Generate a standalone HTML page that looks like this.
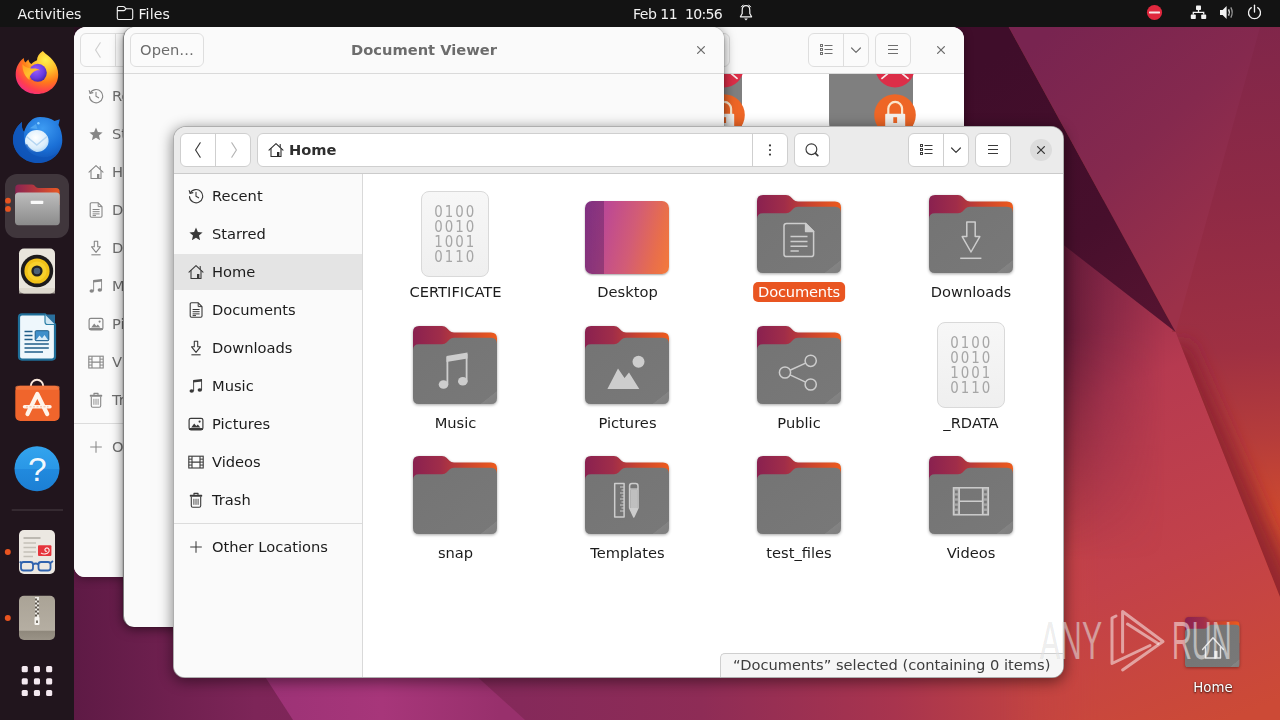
<!DOCTYPE html>
<html lang="en">
<head>
<meta charset="utf-8">
<title>Files - Home</title>
<style>
*{box-sizing:border-box;margin:0;padding:0}
html,body{width:1280px;height:720px;overflow:hidden;background:#3a0d28}
body{position:relative;font-family:"DejaVu Sans","Liberation Sans",sans-serif;font-size:14.67px;color:#1c1c1c;-webkit-font-smoothing:antialiased}
.abs{position:absolute}
#wall{position:absolute;left:0;top:0;width:1280px;height:720px}
/* top bar */
#topbar{opacity:.999;position:absolute;left:0;top:0;width:1280px;height:27px;background:#131313;color:#f2f2f2;font-size:14.1px}
#topbar span{position:absolute;top:5.5px;line-height:16px;white-space:pre}
/* dock */
#dock{position:absolute;left:0;top:27px;width:74px;height:693px;background:#21151d}
/* windows */
.win{position:absolute;background:#fafafa;overflow:hidden;opacity:.999}
.hdr{position:absolute;left:0;top:0;right:0;height:47px;background:#fafafa;border-bottom:1px solid #dadada}
.btn{position:absolute;top:7px;height:33px;background:#fff;border:1px solid #cfcfcf;border-radius:6px}
.win.back .btn{background:#fbfbfb;border-color:#dedede}
.side{position:absolute;left:0;top:47px;bottom:0;width:188px;background:#fafafa;border-right:1px solid #d9d9d9}
.row{position:absolute;left:0;width:188px;height:36px;line-height:36px;padding-left:38px;white-space:nowrap}
.row svg{position:absolute;left:14px;top:10px;width:16px;height:16px;color:#3a3a3a}
.row.sel{background:rgba(0,0,0,.088)}
.back .row{color:#6f6f6f}
.lbl{position:absolute;text-align:center;white-space:nowrap;line-height:20px;height:20px;transform:translateX(-50%)}

.hdr .ic,.btn .ic{position:absolute;top:8px;width:16px;height:16px;color:#3a3a3a}
.btn .ic{top:8px}
.split{position:absolute;top:0;bottom:0;width:1px;background:#cfcfcf}
#w3 .hdr{background:#ebebeb;border-bottom-color:#cbcbcb}
#w3 .btn{top:6px;height:34px;color:#2e2e2e}
.close{position:absolute;width:22px;height:22px;border-radius:11px;background:#dcdcdc}
.sep{position:absolute;left:0;width:188px;height:1px;background:#dcdcdc}
#w3 .side{width:189px}
.main{position:absolute;left:189px;top:47px;right:0;bottom:0;background:#fff}
.status{position:absolute;right:0;bottom:0;height:24px;width:343.5px;background:rgba(246,246,246,.996);border:1px solid #cfcfcf;border-right:0;border-bottom:0;border-radius:5px 0 0 0;line-height:22px;padding-left:12.5px;color:#3d3d3d;white-space:nowrap}

.fold{position:absolute;width:84px;height:78px;overflow:visible;filter:drop-shadow(0 1px 1.5px rgba(0,0,0,.35))}
.binf{position:absolute;width:68px;height:86px}
.desk{position:absolute;width:84.5px;height:73px;border-radius:7px;background:linear-gradient(90deg,rgba(60,20,80,.4) 0,rgba(60,20,80,.34) 19.5px,rgba(0,0,0,0) 19.5px),linear-gradient(103deg,#ac42a2 0%,#be4a92 25%,#d25c76 55%,#e86e4c 82%,#f47a3a 100%);box-shadow:0 1px 2px rgba(0,0,0,.35)}
.lbl.sel{background:rgba(233,84,32,.996);color:#fff;border-radius:5px;padding:0 5px;letter-spacing:-.2px}

.back .hdr .ic{color:#6f6f6f}
.back .btn{top:6px;height:34px;color:#6c6c6c}
.back .split{background:#dedede}
.back .row svg{color:#878787}
.back .main{left:188px}
#w1{box-shadow:0 2px 10px rgba(0,0,0,.35)}
#w2{box-shadow:0 2px 12px rgba(0,0,0,.55),0 0 0 1px rgba(0,0,0,.08)}
#w3{box-shadow:0 3px 14px 1px rgba(0,0,0,.45)}
</style>
</head>
<body>
<svg width="0" height="0" style="position:absolute">
<defs>
<linearGradient id="ftab" x1="0" y1="0" x2="1" y2="0">
<stop offset="0" stop-color="#8a2150"/><stop offset=".33" stop-color="#a02d49"/><stop offset=".62" stop-color="#c8432f"/><stop offset="1" stop-color="#ed5b1c"/>
</linearGradient>
<linearGradient id="ffront" x1="0" y1="0" x2="1" y2="1">
<stop offset="0" stop-color="#747474"/><stop offset=".9" stop-color="#787878"/><stop offset=".905" stop-color="#838383"/><stop offset="1" stop-color="#7e7e7e"/>
</linearGradient>
<linearGradient id="gbin" x1="0" y1="0" x2="0" y2="1"><stop offset="0" stop-color="#f7f7f7"/><stop offset="1" stop-color="#efefef"/></linearGradient>
<symbol id="folder" viewBox="0 0 84 78">
<path d="M0,6 Q0,0 6,0 L29,0 Q32,0 33.5,1.7 L36.5,4.8 Q38,6.4 41,6.4 L78,6.4 Q84,6.4 84,12.4 L84,40 L0,40 Z" fill="url(#ftab)"/>
<path d="M0,24 Q0,18.2 6,18.2 L29,18.2 Q32,18.2 33.5,16.6 L36.5,13.4 Q38,11.8 41,11.8 L78,11.8 Q84,11.8 84,17.8 L84,72 Q84,78 78,78 L6,78 Q0,78 0,72 Z" fill="url(#ffront)"/>
</symbol>
<symbol id="i-recent" viewBox="0 0 16 16"><g fill="none" stroke="currentColor" stroke-width="1.1" stroke-linecap="round" stroke-linejoin="round"><path d="M2.2,5.2 A6.6,6.6 0 1 1 1.5,8.6"/><path d="M1.2,2.6 L2.1,5.4 L4.9,4.6"/><path d="M8,4.2 V8.2 L10.6,9.8"/></g></symbol>
<symbol id="i-star" viewBox="0 0 16 16"><path d="M8,1.6 L9.9,6 L14.6,6.4 L11,9.5 L12.1,14.2 L8,11.7 L3.9,14.2 L5,9.5 L1.4,6.4 L6.1,6 Z" fill="currentColor"/></symbol>
<symbol id="i-home" viewBox="0 0 16 16"><g fill="none" stroke="currentColor" stroke-width="1.1" stroke-linejoin="round" stroke-linecap="round"><path d="M1,8.2 L8,1.6 L15,8.2"/><path d="M3,6.6 V14.5 H13 V6.6"/><path d="M12.2,2.6 V5"/></g><rect x="9" y="10" width="2.4" height="4.5" fill="currentColor"/></symbol>
<symbol id="i-doc" viewBox="0 0 16 16"><g fill="none" stroke="currentColor" stroke-width="1.1" stroke-linejoin="round"><path d="M3.5,0.8 H10.2 L14,4.6 V14 Q14,15.2 12.8,15.2 H3.5 Q2.2,15.2 2.2,14 V2 Q2.2,0.8 3.5,0.8 Z"/><path d="M10.2,0.8 V4.6 H14" stroke-width="1"/><path d="M4.6,7.5 H11.6 M4.6,9.7 H11.6 M4.6,11.9 H11.6 M4.6,13.6 H8" stroke-width="1"/></g></symbol>
<symbol id="i-down" viewBox="0 0 16 16"><g fill="none" stroke="currentColor" stroke-width="1.100" stroke-linejoin="round"><path d="M6.300,1.200 H9.700 V6.800 H12.400 L8,12.400 L3.600,6.800 H6.300 Z"/><path d="M3.400,14.800 H12.600"/></g></symbol>
<symbol id="i-music" viewBox="0 0 16 16"><g fill="currentColor"><path d="M5.200,2 L14,1 V3.400 L5.200,4.400 Z"/><ellipse cx="3.700" cy="13" rx="2.200" ry="1.800"/><ellipse cx="11.800" cy="12" rx="2.200" ry="1.800"/></g><path d="M5.600,2.500 V13 M13.550,1.500 V12" fill="none" stroke="currentColor" stroke-width=".9"/></symbol>
<symbol id="i-pic" viewBox="0 0 16 16"><rect x="1.100" y="2.300" width="13.800" height="11.600" rx="1.800" fill="none" stroke="currentColor" stroke-width="1.200"/><path d="M3.200,11.400 L6.200,7.400 L8.300,10 L9.800,8.400 L12.400,11.400 Z" fill="currentColor"/><circle cx="11.600" cy="5.600" r="1.100" fill="currentColor"/><rect x="1.100" y="12" width="13.800" height="2" rx=".9" fill="currentColor"/></symbol>
<symbol id="i-video" viewBox="0 0 16 16"><g fill="none" stroke="currentColor" stroke-width="1.100"><rect x=".800" y="2.200" width="14.400" height="11.800"/><path d="M4,2.200 V14 M12,2.200 V14 M4,8.100 H12"/><path d="M.800,5.150 H4 M.800,8.100 H4 M.800,11.050 H4 M12,5.150 H15.200 M12,8.100 H15.200 M12,11.050 H15.200" stroke-width="1"/></g></symbol>
<symbol id="i-trash" viewBox="0 0 16 16"><g fill="none" stroke="currentColor" stroke-linejoin="round" stroke-linecap="round"><path d="M6,2.600 V1.300 H10 V2.600" stroke-width="1.200"/><path d="M3.300,5 V13.800 Q3.300,15.300 4.800,15.300 H11.200 Q12.700,15.300 12.700,13.800 V5" stroke-width="1.100"/><path d="M5.900,6.800 V12.800 M8,6.800 V12.800 M10.100,6.800 V12.800" stroke-width=".9" stroke-linecap="butt"/></g><rect x="1.800" y="2.700" width="12.400" height="2" rx=".6" fill="currentColor"/></symbol>
<symbol id="i-plus" viewBox="0 0 16 16"><path d="M8,2.200 V13.800 M2.200,8 H13.800" fill="none" stroke="currentColor" stroke-width="1.050"/></symbol>
<symbol id="i-list" viewBox="0 0 16 16"><g fill="none" stroke="currentColor" stroke-width="1"><rect x="2.500" y="2.500" width="2" height="2"/><rect x="2.500" y="6.500" width="2" height="2"/><rect x="2.500" y="10.500" width="2" height="2"/><path d="M6.500,3.500 H14.500 M6.500,7.500 H14.500 M6.500,11.500 H14.500" stroke-width="1.100"/></g></symbol>
<symbol id="i-chev" viewBox="0 0 16 16"><path d="M3.600,6 L8,10.400 L12.400,6" fill="none" stroke="currentColor" stroke-width="1.2" stroke-linecap="round" stroke-linejoin="round"/></symbol>
<symbol id="i-menu" viewBox="0 0 16 16"><path d="M3,3.500 H13 M3,7.500 H13 M3,11.500 H13" fill="none" stroke="currentColor" stroke-width="1.100"/></symbol>
<symbol id="i-x" viewBox="0 0 16 16"><path d="M4.600,4.600 L11.400,11.400 M11.400,4.600 L4.600,11.400" fill="none" stroke="currentColor" stroke-width="1.300" stroke-linecap="round"/></symbol>
<symbol id="i-back" viewBox="0 0 16 16"><path d="M10.200,0.800 L5.600,8 L10.200,15.200" fill="none" stroke="currentColor" stroke-width="1.2" stroke-linecap="round" stroke-linejoin="round"/></symbol>
<symbol id="i-fwd" viewBox="0 0 16 16"><path d="M5.800,0.800 L10.400,8 L5.800,15.200" fill="none" stroke="currentColor" stroke-width="1.2" stroke-linecap="round" stroke-linejoin="round"/></symbol>
<symbol id="i-dots" viewBox="0 0 16 16"><g fill="currentColor"><circle cx="8" cy="3.4" r="1.1"/><circle cx="8" cy="8" r="1.1"/><circle cx="8" cy="12.6" r="1.1"/></g></symbol>
<symbol id="i-search" viewBox="0 0 16 16"><g fill="none" stroke="currentColor" stroke-width="1.150" stroke-linecap="round"><circle cx="7.400" cy="7.200" r="5.400"/><path d="M11.500,11.300 L13.800,13.600" stroke-width="1.700"/></g></symbol>
</defs>
</svg>
<!-- WALLPAPER -->
<svg id="wall" viewBox="0 0 1280 720">
<defs>
<linearGradient id="wbase" gradientUnits="userSpaceOnUse" x1="74" y1="0" x2="1280" y2="0">
<stop offset="0" stop-color="#5e1a45"/><stop offset=".08" stop-color="#6f204f"/><stop offset=".15" stop-color="#7d2558"/><stop offset=".37" stop-color="#85295a"/><stop offset=".52" stop-color="#8e2c56"/><stop offset=".68" stop-color="#a8344e"/><stop offset=".8" stop-color="#c14342"/><stop offset=".9" stop-color="#ca483a"/><stop offset="1" stop-color="#cc4a34"/>
</linearGradient>
<linearGradient id="wmag" gradientUnits="userSpaceOnUse" x1="265" y1="0" x2="500" y2="0">
<stop offset="0" stop-color="#9c3276"/><stop offset=".5" stop-color="#a7367a"/><stop offset="1" stop-color="#98306c"/>
</linearGradient>
<linearGradient id="wdark" gradientUnits="userSpaceOnUse" x1="990" y1="60" x2="1175" y2="332">
<stop offset="0" stop-color="#3f0d2a"/><stop offset=".6" stop-color="#470f2c"/><stop offset="1" stop-color="#581431"/>
</linearGradient>
<linearGradient id="wpur" gradientUnits="userSpaceOnUse" x1="1040" y1="40" x2="1230" y2="260">
<stop offset="0" stop-color="#782450"/><stop offset=".5" stop-color="#85294e"/><stop offset="1" stop-color="#9c3149"/>
</linearGradient>
<linearGradient id="wright" gradientUnits="userSpaceOnUse" x1="1235" y1="27" x2="1290" y2="610">
<stop offset="0" stop-color="#80264a"/><stop offset=".3" stop-color="#8f2a45"/><stop offset=".55" stop-color="#9f3042"/><stop offset=".7" stop-color="#b53c3b"/><stop offset=".84" stop-color="#cf4a2e"/><stop offset="1" stop-color="#d24c2c"/>
</linearGradient>
<linearGradient id="wlow" gradientUnits="userSpaceOnUse" x1="1040" y1="260" x2="1230" y2="720">
<stop offset="0" stop-color="#8c2a4a"/><stop offset=".3" stop-color="#b63a50"/><stop offset=".65" stop-color="#c2414a"/><stop offset="1" stop-color="#cc4a36"/>
</linearGradient>
<linearGradient id="wfade2" gradientUnits="userSpaceOnUse" x1="1000" y1="0" x2="1100" y2="0">
<stop offset="0" stop-color="#fff" stop-opacity="0"/><stop offset="1" stop-color="#fff" stop-opacity="1"/>
</linearGradient>
<mask id="wm2"><rect x="900" y="0" width="380" height="720" fill="url(#wfade2)"/></mask>
<linearGradient id="wlowl" gradientUnits="userSpaceOnUse" x1="1055" y1="0" x2="1165" y2="0">
<stop offset="0" stop-color="#4c1131" stop-opacity=".92"/><stop offset=".45" stop-color="#5e183a" stop-opacity=".4"/><stop offset="1" stop-color="#6a1c40" stop-opacity="0"/>
</linearGradient>
<linearGradient id="wfade3" gradientUnits="userSpaceOnUse" x1="0" y1="330" x2="0" y2="560">
<stop offset="0" stop-color="#fff" stop-opacity="1"/><stop offset="1" stop-color="#fff" stop-opacity="0"/>
</linearGradient>
<mask id="wm3"><rect x="1040" y="200" width="130" height="360" fill="url(#wfade3)"/></mask>
<filter id="wb14" x="-50%" y="-50%" width="200%" height="200%"><feGaussianBlur stdDeviation="16"/></filter>
<filter id="wb9" x="-50%" y="-50%" width="200%" height="200%"><feGaussianBlur stdDeviation="9"/></filter>
<clipPath id="wrc"><path d="M1262,0 L1280,0 L1280,597 L1175.600,332 L1172,332 Z"/></clipPath>
</defs>
<rect width="1280" height="720" fill="url(#wbase)"/>
<polygon points="262,672 472,672 525,720 293,720" fill="url(#wmag)"/>
<rect x="70" y="20" width="24" height="26" fill="#2a1022"/>
<path d="M900,118 L1185,332 L1280,575 L1280,720 L900,720 Z" fill="url(#wlow)" mask="url(#wm2)"/>
<rect x="1040" y="200" width="130" height="360" fill="url(#wlowl)" mask="url(#wm3)"/>
<path d="M1262,0 L1280,0 L1280,597 L1175.600,332 L1172,332 Z" fill="url(#wright)"/>
<g clip-path="url(#wrc)"><path d="M1160,350 L1267,625 L1306,608 L1188,342 Z" fill="#8a2230" fill-opacity=".85" filter="url(#wb9)"/></g>
<polygon points="994,0 1267.600,0 1175.600,332" fill="url(#wpur)"/>
<polygon points="900,0 994,0 1175.600,332 900,118" fill="url(#wdark)"/>
</svg>

<!-- DESKTOP ICON -->
<svg class="abs" style="left:1184.3px;top:616.6px;width:56.7px;height:50.8px;filter:drop-shadow(0 1px 1.5px rgba(0,0,0,.35))" viewBox="0 0 84 78"><use href="#folder"/><g fill="none" stroke="#e4e4e4" stroke-width="2.2" stroke-linejoin="round" stroke-linecap="round"><path d="M27,50 L43,32 L59,50"/><path d="M31.500,46 V63 H54.500 V46"/></g><rect x="45" y="52" width="5" height="11" fill="#e4e4e4"/></svg>
<div class="abs" style="left:1163px;top:677.6px;width:100px;text-align:center;color:#fff;line-height:20px;font-size:13.33px;opacity:.999;text-shadow:0 1px 2px rgba(0,0,0,.7),0 0 2px rgba(0,0,0,.5)">Home</div>
<!-- BACK FILES WINDOW -->
<div class="win back" id="w1" style="left:74px;top:27px;width:890px;height:550px;border-radius:12px 12px 11px 11px">
<div class="hdr">
<div class="btn" style="left:6px;width:71px"><svg class="ic" style="left:9px;color:#cfcfcf"><use href="#i-back"/></svg><i class="split" style="left:34px"></i><svg class="ic" style="left:45px;color:#d6d6d6"><use href="#i-fwd"/></svg></div>
<div class="btn" style="left:83px;width:531px"><b style="position:absolute;left:31px;top:0;line-height:32px">Home</b></div>
<div class="btn" style="left:620px;width:36px"></div>
<div class="btn" style="left:734px;width:61px"><svg class="ic" style="left:9px"><use href="#i-list"/></svg><i class="split" style="left:34px"></i><svg class="ic" style="left:39px"><use href="#i-chev"/></svg></div>
<div class="btn" style="left:801px;width:36px"><svg class="ic" style="left:9px"><use href="#i-menu"/></svg></div>
<svg class="ic" style="left:859px;top:15px"><use href="#i-x"/></svg>
</div>
<div class="side">
<div class="row" style="top:4px"><svg><use href="#i-recent"/></svg>Recent</div>
<div class="row" style="top:42px"><svg><use href="#i-star"/></svg>Starred</div>
<div class="row" style="top:80px"><svg><use href="#i-home"/></svg>Home</div>
<div class="row" style="top:118px"><svg><use href="#i-doc"/></svg>Documents</div>
<div class="row" style="top:156px"><svg><use href="#i-down"/></svg>Downloads</div>
<div class="row" style="top:194px"><svg><use href="#i-music"/></svg>Music</div>
<div class="row" style="top:232px"><svg><use href="#i-pic"/></svg>Pictures</div>
<div class="row" style="top:270px"><svg><use href="#i-video"/></svg>Videos</div>
<div class="row" style="top:308px"><svg><use href="#i-trash"/></svg>Trash</div>
<div class="sep" style="top:349px"></div>
<div class="row" style="top:355px"><svg><use href="#i-plus"/></svg>Other Locations</div>
</div>
<div class="main">
<svg class="abs" style="left:395.5px;top:0;width:100px;height:60px;overflow:hidden" viewBox="0 0 100 60">
<path d="M0,0 H84 V60 H6 Q0,60 0,46 Z" fill="#7f7f7f"/>
<circle cx="66" cy="-6" r="19.5" fill="#dc2e48"/>
<path d="M53,4.400 L58.500,-.2 M79,4.400 L73.500,-.2" stroke="#f8eaea" stroke-width="1.700" stroke-linecap="round"/>
<circle cx="66" cy="41" r="20.8" fill="#ee6626"/>
<path d="M59.300,41 V34.800 A6.900,6.900 0 0 1 73.100,34.800 V41" fill="none" stroke="#fbe6cc" stroke-width="2.200"/>
<rect x="56.200" y="39.700" width="20" height="17" rx="1" fill="#f3f1ee"/>
<rect x="64.300" y="43.200" width="3.800" height="5.800" fill="#ee6626"/>
</svg>
<svg class="abs" style="left:566.9px;top:0;width:100px;height:60px;overflow:hidden" viewBox="0 0 100 60">
<path d="M0,0 H84 V60 H6 Q0,60 0,46 Z" fill="#7f7f7f"/>
<circle cx="66" cy="-6" r="19.5" fill="#dc2e48"/>
<path d="M53,4.400 L58.500,-.2 M79,4.400 L73.500,-.2" stroke="#f8eaea" stroke-width="1.700" stroke-linecap="round"/>
<circle cx="66" cy="41" r="20.8" fill="#ee6626"/>
<path d="M59.300,41 V34.800 A6.900,6.900 0 0 1 73.100,34.800 V41" fill="none" stroke="#fbe6cc" stroke-width="2.200"/>
<rect x="56.200" y="39.700" width="20" height="17" rx="1" fill="#f3f1ee"/>
<rect x="64.300" y="43.200" width="3.800" height="5.800" fill="#ee6626"/>
</svg>
</div>
</div>
<!-- DOCUMENT VIEWER -->
<div class="win back" id="w2" style="left:123px;top:27px;width:601px;height:600px;border-radius:12px 12px 11px 11px;border-left:1px solid rgba(0,0,0,.5)">
<div class="hdr">
<div class="btn" style="left:6px;width:74px;text-align:center;line-height:31px;color:#6c6c6c">Open…</div>
<b style="position:absolute;left:0;right:0;top:0;text-align:center;line-height:46px;color:#6c6c6c">Document Viewer</b>
<svg class="ic" style="left:569px;top:15px"><use href="#i-x"/></svg>
</div>
</div>
<!-- FRONT FILES WINDOW -->
<div class="win" id="w3" style="left:173px;top:126px;width:891px;height:552px;border-radius:13px 13px 12px 12px;border:1px solid rgba(0,0,0,.3)">
<div class="hdr">
<div class="btn" style="left:6px;width:71px"><svg class="ic" style="left:9px;color:#3a3a3a"><use href="#i-back"/></svg><i class="split" style="left:34px"></i><svg class="ic" style="left:45px;color:#b4b4b4"><use href="#i-fwd"/></svg></div>
<div class="btn" style="left:83px;width:531px"><svg class="ic" style="left:10px;color:inherit"><use href="#i-home"/></svg><b style="position:absolute;left:31px;top:0;line-height:32px">Home</b><i class="split" style="left:494px"></i><svg class="ic" style="left:503.5px"><use href="#i-dots"/></svg></div>
<div class="btn" style="left:620px;width:36px"><svg class="ic" style="left:9px"><use href="#i-search"/></svg></div>
<div class="btn" style="left:734px;width:61px"><svg class="ic" style="left:9px"><use href="#i-list"/></svg><i class="split" style="left:34px"></i><svg class="ic" style="left:39px"><use href="#i-chev"/></svg></div>
<div class="btn" style="left:801px;width:36px"><svg class="ic" style="left:9px"><use href="#i-menu"/></svg></div>
<div class="close" style="left:856px;top:12px"><svg class="ic" style="left:3px;top:3px"><use href="#i-x"/></svg></div>
</div>
<div class="side">
<div class="row" style="top:4px"><svg><use href="#i-recent"/></svg>Recent</div>
<div class="row" style="top:42px"><svg><use href="#i-star"/></svg>Starred</div>
<div class="row sel" style="top:80px"><svg><use href="#i-home"/></svg>Home</div>
<div class="row" style="top:118px"><svg><use href="#i-doc"/></svg>Documents</div>
<div class="row" style="top:156px"><svg><use href="#i-down"/></svg>Downloads</div>
<div class="row" style="top:194px"><svg><use href="#i-music"/></svg>Music</div>
<div class="row" style="top:232px"><svg><use href="#i-pic"/></svg>Pictures</div>
<div class="row" style="top:270px"><svg><use href="#i-video"/></svg>Videos</div>
<div class="row" style="top:308px"><svg><use href="#i-trash"/></svg>Trash</div>
<div class="sep" style="top:349px"></div>
<div class="row" style="top:355px"><svg><use href="#i-plus"/></svg>Other Locations</div>
</div>
<div class="main" id="grid">
<svg class="binf" style="left:57.6px;top:17.1px" viewBox="0 0 68 86"><rect x=".5" y=".5" width="67" height="85" rx="7.5" fill="url(#gbin)" stroke="#d9d9d9"/><g font-family="DejaVu Sans, Liberation Sans, sans-serif" font-size="13.4px" fill="#a6a6a6" transform="scale(1 1.14)"><text x="13.2 23.7 34.2 44.7" y="22.81">0100</text><text x="13.2 23.7 34.2 44.7" y="35.88">0010</text><text x="13.2 23.7 34.2 44.7" y="48.95">1001</text><text x="13.2 23.7 34.2 44.7" y="62.02">0110</text></g></svg>
<div class="lbl" style="left:92.5px;top:107.5px">CERTIFICATE</div>
<div class="desk" style="left:221.5px;top:26.69999999999999px"></div>
<div class="lbl" style="left:264.5px;top:107.5px">Desktop</div>
<svg class="fold" style="left:393.9px;top:21.4px" viewBox="0 0 84 78"><use href="#folder"/><g fill="none" stroke="#cdcdcd" stroke-width="1.5" stroke-linejoin="round"><path d="M29.5,28.6 H48.6 L56.6,36.6 V59.2 Q56.6,61.6 54.2,61.6 H29.5 Q27,61.6 27,59.2 V31 Q27,28.6 29.5,28.6 Z"/><path d="M48.6,28.6 V36.6 H56.6 Z" fill="#cdcdcd"/><path d="M33.5,41.6 H50.5 M33.5,46.4 H50.5 M33.5,51.2 H50.5 M33.5,56 H41.8"/></g></svg>
<div class="lbl sel" style="left:436px;top:107.5px">Documents</div>
<svg class="fold" style="left:566.2px;top:21.4px" viewBox="0 0 84 78"><use href="#folder"/><g fill="none" stroke="#cdcdcd" stroke-width="1.5" stroke-linejoin="round"><path d="M37.8,27 H46.2 V41.6 H50.8 L42,57 L33.2,41.6 H37.8 Z"/><path d="M31.2,63.3 H52.4"/></g></svg>
<div class="lbl" style="left:608px;top:107.5px">Downloads</div>
<svg class="fold" style="left:50.2px;top:152.0px" viewBox="0 0 84 78"><use href="#folder"/><g fill="#cdcdcd"><path d="M33.5,30 L54.5,26.5 V32.5 L33.5,36 Z"/><ellipse cx="30.5" cy="58.5" rx="4.8" ry="4.3"/><ellipse cx="49.8" cy="55.2" rx="4.8" ry="4.3"/><rect x="33.5" y="31" width="1.8" height="27.5"/><rect x="52.7" y="28" width="1.8" height="27.5"/></g></svg>
<div class="lbl" style="left:92.5px;top:239px">Music</div>
<svg class="fold" style="left:222.1px;top:152.0px" viewBox="0 0 84 78"><use href="#folder"/><g fill="#cdcdcd"><path d="M22.4,63 L33,42.4 L39.5,52 L44,46.5 L54.3,63 Z"/><circle cx="53.5" cy="35.8" r="6"/></g></svg>
<div class="lbl" style="left:264.5px;top:239px">Pictures</div>
<svg class="fold" style="left:393.9px;top:152.0px" viewBox="0 0 84 78"><use href="#folder"/><g fill="none" stroke="#cdcdcd" stroke-width="1.5"><circle cx="53.7" cy="34.8" r="5.6"/><circle cx="28" cy="46.5" r="5.6"/><circle cx="53.7" cy="58.5" r="5.6"/><path d="M33,44.2 L48.6,37.1 M33,48.9 L48.6,56.1"/></g></svg>
<div class="lbl" style="left:436px;top:239px">Public</div>
<svg class="binf" style="left:574.2px;top:147.7px" viewBox="0 0 68 86"><rect x=".5" y=".5" width="67" height="85" rx="7.5" fill="url(#gbin)" stroke="#d9d9d9"/><g font-family="DejaVu Sans, Liberation Sans, sans-serif" font-size="13.4px" fill="#a6a6a6" transform="scale(1 1.14)"><text x="13.2 23.7 34.2 44.7" y="22.81">0100</text><text x="13.2 23.7 34.2 44.7" y="35.88">0010</text><text x="13.2 23.7 34.2 44.7" y="48.95">1001</text><text x="13.2 23.7 34.2 44.7" y="62.02">0110</text></g></svg>
<div class="lbl" style="left:608px;top:239px">_RDATA</div>
<svg class="fold" style="left:50.2px;top:282.3px" viewBox="0 0 84 78"><use href="#folder"/></svg>
<div class="lbl" style="left:92.5px;top:368.5px">snap</div>
<svg class="fold" style="left:222.1px;top:282.3px" viewBox="0 0 84 78"><use href="#folder"/><g fill="none" stroke="#cdcdcd" stroke-width="1.5" stroke-linejoin="round"><rect x="29.7" y="27.5" width="9.4" height="33.5"/><path d="M35,31 H39 M36.5,34 H39 M35,37 H39 M36.5,40 H39 M35,43 H39 M36.5,46 H39 M35,49 H39 M36.5,52 H39 M35,55 H39" stroke-width="1"/><path d="M44.6,52 V30 Q44.6,27.5 47,27.5 H50.6 Q53,27.5 53,30 V52 L48.8,61 Z"/><path d="M44.6,33 H53" stroke-width="1.2"/></g><path d="M44.6,52 H53 L48.8,61 Z" fill="#cdcdcd"/><rect x="45.4" y="33.5" width="6.8" height="18.5" fill="#cdcdcd" opacity=".85"/></svg>
<div class="lbl" style="left:264.5px;top:368.5px">Templates</div>
<svg class="fold" style="left:393.9px;top:282.3px" viewBox="0 0 84 78"><use href="#folder"/></svg>
<div class="lbl" style="left:436px;top:368.5px">test_files</div>
<svg class="fold" style="left:566.2px;top:282.3px" viewBox="0 0 84 78"><use href="#folder"/><g fill="none" stroke="#cdcdcd" stroke-width="1.5"><rect x="24.5" y="31.8" width="34.8" height="27"/><path d="M30.2,31.8 V58.8 M53.6,31.8 V58.8 M30.2,45.3 H53.6"/></g><g fill="#cdcdcd"><rect x="24.5" y="31.8" width="5.7" height="27" opacity=".55"/><rect x="53.6" y="31.8" width="5.7" height="27" opacity=".55"/></g><g fill="#777"><rect x="26" y="34.5" width="2.7" height="2.7"/><rect x="26" y="39.6" width="2.7" height="2.7"/><rect x="26" y="44.7" width="2.7" height="2.7"/><rect x="26" y="49.8" width="2.7" height="2.7"/><rect x="26" y="54.9" width="2.7" height="2.7"/><rect x="55.1" y="34.5" width="2.7" height="2.7"/><rect x="55.1" y="39.6" width="2.7" height="2.7"/><rect x="55.1" y="44.7" width="2.7" height="2.7"/><rect x="55.1" y="49.8" width="2.7" height="2.7"/><rect x="55.1" y="54.9" width="2.7" height="2.7"/></g></svg>
<div class="lbl" style="left:608px;top:368.5px">Videos</div>
</div>
<div class="status">“Documents” selected (containing 0 items)</div>
</div>

<!-- WATERMARK -->
<svg class="abs" style="left:1030px;top:600px;width:250px;height:80px;pointer-events:none" viewBox="1030 600 250 80">
<g fill="#000000" fill-opacity=".15" font-family="Liberation Sans, sans-serif" font-size="53">
<text x="1040" y="658.600" textLength="62" lengthAdjust="spacingAndGlyphs">ANY</text>
</g>
<g fill="#ffffff" fill-opacity=".5" font-family="Liberation Sans, sans-serif" font-size="53">
<text x="1040" y="658.600" textLength="62" lengthAdjust="spacingAndGlyphs">ANY</text>
<text x="1172" y="658.600" textLength="59.500" lengthAdjust="spacingAndGlyphs">RUN</text>
</g>
<g fill="none" stroke="#ffffff" stroke-opacity=".5" stroke-width="3" stroke-linejoin="round" stroke-linecap="round">
<path d="M1122.600,652 V611.500 L1163,641.500 L1122.600,670"/>
<path d="M1116,616 L1112,618 V663.500 L1150,645.500"/>
<path d="M1127.500,624 L1158,643.500"/>
</g>
</svg>
<!-- TOP BAR -->
<div id="topbar">
<span style="left:17.6px;letter-spacing:-.05px">Activities</span>
<svg class="abs" style="left:116px;top:5px;width:18px;height:16px" viewBox="0 0 18 16"><path d="M1.3,3 Q1.3,1.5 2.8,1.5 H7.2 Q8,1.5 8.6,2.2 L9.4,3.2 Q9.9,3.7 10.7,3.7 H15.2 Q16.7,3.7 16.7,5.2 V13 Q16.7,14.5 15.2,14.5 H2.8 Q1.3,14.5 1.3,13 Z M1.3,5.6 H7.6 Q8.6,5.6 9.3,4.6 L9.9,3.7" fill="none" stroke="#f2f2f2" stroke-width="1.1" stroke-linejoin="round"/></svg>
<span style="left:138.4px;letter-spacing:.15px">Files</span>
<span style="left:633px;letter-spacing:-.55px">Feb 11</span><span style="left:685px;letter-spacing:-.75px">10:56</span>
<svg class="abs" style="left:738px;top:4px;width:16px;height:18px" viewBox="0 0 16 18"><path d="M8,1.6 C5.2,1.6 4.2,3.8 4.2,6.4 V9.5 L2.4,12.8 H13.6 L11.800000000000001,9.5 V6.4 C11.8,3.8 10.8,1.6 8,1.6 Z" fill="none" stroke="#f2f2f2" stroke-width="1.2" stroke-linejoin="round"/><path d="M3.2,3.2 Q4,1.6 5.4,1 M12.8,3.2 Q12,1.6 10.6,1" fill="none" stroke="#f2f2f2" stroke-width="1"/><path d="M6.2,14.4 H9.8 L8,16.4 Z" fill="#f2f2f2"/></svg>
<svg class="abs" style="left:1146px;top:4px;width:17px;height:17px" viewBox="0 0 17 17"><circle cx="8.5" cy="8.5" r="7.6" fill="#e0283e"/><rect x="3" y="7.5" width="11" height="2" rx=".4" fill="#f6eaea"/></svg>
<svg class="abs" style="left:1190px;top:5px;width:17px;height:15px" viewBox="0 0 17 15"><g fill="#f2f2f2"><rect x="6" y="0.6" width="5" height="4.4" rx=".8"/><rect x="0.8" y="9.6" width="5" height="4.4" rx=".8"/><rect x="11.2" y="9.6" width="5" height="4.4" rx=".8"/></g><path d="M8.5,5 V7.4 M3.3,9.6 V7.4 H13.7 V9.6" fill="none" stroke="#f2f2f2" stroke-width="1.3"/></svg>
<svg class="abs" style="left:1219px;top:5px;width:17px;height:15px" viewBox="0 0 17 15"><path d="M1,5 H3.6 L7.6,1 V14 L3.6,10 H1 Z" fill="#f2f2f2"/><path d="M9.6,4.4 Q11.2,7.5 9.6,10.6" fill="none" stroke="#f2f2f2" stroke-width="1.3"/><path d="M11.8,2.4 Q14.6,7.5 11.8,12.6" fill="none" stroke="#9a9a9a" stroke-width="1.3"/></svg>
<svg class="abs" style="left:1246px;top:4px;width:17px;height:17px" viewBox="0 0 17 17"><path d="M5.3,3.6 A6,6 0 1 0 11.7,3.6" fill="none" stroke="#f2f2f2" stroke-width="1.3" stroke-linecap="round"/><path d="M8.5,1.2 V8" stroke="#f2f2f2" stroke-width="1.3" stroke-linecap="round"/></svg>
</div>
<!-- DOCK -->
<div id="dock">
<svg class="abs" style="left:0;top:0;width:74px;height:693px" viewBox="0 27 74 693">
<defs>
<radialGradient id="ffo" cx=".7" cy=".2" r=".95"><stop offset="0" stop-color="#fff14e"/><stop offset=".3" stop-color="#ffbd2a"/><stop offset=".55" stop-color="#ff7a1a"/><stop offset=".78" stop-color="#ff3f4e"/><stop offset="1" stop-color="#ee249a"/></radialGradient>
<radialGradient id="ffg" cx=".4" cy=".35" r=".75"><stop offset="0" stop-color="#9a5cff"/><stop offset=".6" stop-color="#6a3be0"/><stop offset="1" stop-color="#3a1f9a"/></radialGradient>
<linearGradient id="ffa" x1="0" y1="0" x2="1" y2="1"><stop offset="0" stop-color="#ff9a22"/><stop offset=".5" stop-color="#ffc02c"/><stop offset="1" stop-color="#ff7a1a"/></linearGradient>
<radialGradient id="tbb" cx=".6" cy=".25" r=".9"><stop offset="0" stop-color="#3d9bf2"/><stop offset=".5" stop-color="#1a6fd6"/><stop offset="1" stop-color="#0b3f9c"/></radialGradient>
<radialGradient id="tbe" cx=".45" cy=".35" r=".7"><stop offset="0" stop-color="#ffffff"/><stop offset=".7" stop-color="#d8ecfb"/><stop offset="1" stop-color="#a8d2f4"/></radialGradient>
<linearGradient id="dft" x1="0" y1="0" x2="1" y2="0"><stop offset="0" stop-color="#8a2452"/><stop offset=".5" stop-color="#b93a3c"/><stop offset="1" stop-color="#e95a24"/></linearGradient>
<linearGradient id="dff" x1="0" y1="0" x2="0" y2="1"><stop offset="0" stop-color="#bdbdbd"/><stop offset="1" stop-color="#8b8b8b"/></linearGradient>
<linearGradient id="hlp" x1="0" y1="0" x2="0" y2="1"><stop offset="0" stop-color="#33a4ee"/><stop offset=".5" stop-color="#2a97e6"/><stop offset=".5" stop-color="#218ade"/><stop offset="1" stop-color="#1c7fd4"/></linearGradient>
<linearGradient id="arc" x1="0" y1="0" x2="0" y2="1"><stop offset="0" stop-color="#aaa396"/><stop offset=".78" stop-color="#b5aea2"/><stop offset=".8" stop-color="#8f887c"/><stop offset="1" stop-color="#9a9387"/></linearGradient>
</defs>
<!-- firefox -->
<path d="M42.800,51 C46,54.500 50,56.500 53,60.500 C56.500,64.500 58.200,69.500 58.200,74.500 C58.200,85.500 49,94 37,94 C25,94 15.700,85.500 15.700,74.500 C15.700,67.500 18.500,62 23.800,58 C23.800,60 24.500,61.500 25.500,62.500 C26.500,61 27.500,60 28.500,59.500 C28.800,61.500 29.800,63 31.500,64 C33,62.500 35,61 37,60.300 C37,57 39,53.500 42.800,51 Z" fill="url(#ffo)"/>
<circle cx="37.800" cy="72.800" r="9" fill="url(#ffg)"/>
<path d="M22.500,64 C25,67.500 29,68.500 33.500,68.500 C36.500,68.500 38.500,69 40,70.500 C37.500,70 35.500,70.500 33.500,72 C31,74 29,76.500 29.500,80 C25,77 22,70 22.500,64 Z" fill="url(#ffa)"/>
<!-- thunderbird -->
<path d="M40,117 C46,117 51,118.500 54.500,121 L59.800,119.300 L58.500,125 C61,129.500 62.300,134.500 62.300,140 C62.300,153 51.500,163 38,163 C25,163 14,153.500 13,141 C12.500,134 16,127 22,122 C21.500,126 22,129.500 24,132 C27,123 32.500,117 40,117 Z" fill="url(#tbb)"/>
<path d="M13,141 C14,153.500 25,163 38,163 C47,163 54.500,158.500 58.500,152 C53,156.500 45,158.500 38,156.500 C28,154 23,146 24,132 C22,129.500 21.500,126 22,122 C16,127 12.500,134 13,141 Z" fill="#0f55b8" opacity=".85"/>
<ellipse cx="36.800" cy="141" rx="11.800" ry="11" fill="url(#tbe)"/>
<path d="M26.500,136.500 L36.800,145 L47,136.500" fill="none" stroke="#b5d6f2" stroke-width="1.500"/>
<path d="M25,145 C27.500,152.500 36,156.500 45.500,152.500 C40,154 30.500,151.500 27,144 Z" fill="#1a62c4" opacity=".8"/>
<path d="M29.700,128.200 L36,124 L37.500,129 Z" fill="#4fa6f2"/>
<circle cx="38.400" cy="123.300" r="1.200" fill="#8fd0ff"/>
<!-- files -->
<rect x="5" y="174" width="64" height="64" rx="12" fill="#ffffff" fill-opacity=".14"/>
<path d="M15.300,188 Q15.300,184.400 18.900,184.400 H31.500 Q33.500,184.400 34.500,185.500 L35.800,187 Q36.800,188 38.800,188 H56 Q59.600,188 59.600,191.600 V205 H15.300 Z" fill="url(#dft)"/>
<rect x="15" y="192.500" width="44.800" height="32.700" rx="3.600" fill="url(#dff)"/>
<rect x="30.700" y="200.700" width="12.600" height="3.400" rx=".8" fill="#fafafa"/>
<circle cx="8" cy="200.700" r="2.900" fill="#e95420"/><circle cx="8" cy="208.900" r="2.900" fill="#e95420"/>
<!-- rhythmbox -->
<rect x="19" y="248.500" width="36" height="45" rx="5" fill="#e9e5dc"/>
<rect x="19" y="288" width="36" height="5.500" rx="0" fill="#d9d4c8" opacity=".7"/>
<circle cx="37" cy="271" r="16.200" fill="#1d1b1c"/>
<circle cx="37" cy="271" r="12.600" fill="#f2c218"/>
<circle cx="37" cy="271" r="9.500" fill="#f7d02c"/>
<circle cx="37" cy="271" r="5.600" fill="#232323"/>
<circle cx="37" cy="271" r="3.300" fill="#4a6078"/>
<!-- writer -->
<path d="M22,314.400 H45 L55,324.500 V356.600 Q55,359.600 52,359.600 H22 Q19,359.600 19,356.600 V317.400 Q19,314.400 22,314.400 Z" fill="#eef7fc" stroke="#1f6e98" stroke-width="2.200"/>
<path d="M45,314.400 L55,324.500 V314.400 Z" fill="#2a6f9c"/>
<path d="M45,314.400 V322 Q45,324.500 47.500,324.500 H55" fill="#cfe6f2" stroke="#2a7fa6" stroke-width="1.200"/>
<g stroke="#1f5d88" stroke-width="1.700"><path d="M24.500,331.500 H32.500 M24.500,335.500 H32.500 M24.500,339.500 H32.500 M24.500,344 H48.800 M24.500,348 H48.800 M24.500,352 H43"/></g>
<rect x="35.200" y="330.700" width="13.600" height="10" rx="1" fill="#3f8fca" stroke="#1f5d88" stroke-width="1"/>
<path d="M36,340 L39.500,335.500 L42,338.200 L44.500,335 L48,340 Z" fill="#d9ecf8"/>
<!-- software -->
<path d="M30.800,388 V386 A6.200,6.200 0 0 1 43.200,386 V388" fill="none" stroke="#fbe9dc" stroke-width="2"/>
<rect x="15.300" y="385.700" width="44.300" height="35.300" rx="5" fill="#f0652c"/>
<rect x="15.300" y="385.700" width="44.300" height="4" rx="2" fill="#f57e45" opacity=".7"/>
<g fill="none" stroke="#fff4ea" stroke-width="4.200" stroke-linecap="round" stroke-linejoin="round"><path d="M27.500,414 L37.300,394 L47.200,414"/><path d="M24.500,406.800 H50" stroke-width="3.400"/></g><path d="M26,406.800 H48.500" stroke="#f5b08a" stroke-width=".8" stroke-dasharray="2 1.500"/>
<!-- help -->
<circle cx="37" cy="468.800" r="22.500" fill="url(#hlp)"/>
<!-- separator -->
<rect x="11.700" y="509.500" width="51.300" height="1" fill="#4b4047"/>
<!-- evince -->
<rect x="19" y="530" width="36" height="44" rx="5" fill="#ece8e2"/>
<g stroke="#aeaaa2" stroke-width="1.500"><path d="M23.500,538 H40.500"/><path d="M23.500,543 H36 M23.500,547.500 H36 M23.500,552 H36 M23.500,556.500 H33" stroke="#c4c0b8"/></g>
<rect x="38" y="545.300" width="13.400" height="10.700" rx="1" fill="#e5343c"/>
<path d="M41,553 C43,554.500 47.500,554.500 49,551.500 C50,549 47.500,547 45.500,548.500 C44,550 45.500,552 47,551" fill="none" stroke="#fbe3e3" stroke-width="1.200"/>
<g fill="none" stroke="#2f62ae" stroke-width="1.800"><rect x="21" y="562" width="12" height="8.500" rx="2.500"/><rect x="38.500" y="562" width="12" height="8.500" rx="2.500"/><path d="M33,564.500 Q35.800,562.500 38.500,564.500"/><path d="M21,563 L19.800,561.500 M50.500,563 L53,561"/></g>
<circle cx="7.800" cy="552" r="3" fill="#e95420"/>
<!-- archive -->
<rect x="19" y="595.800" width="36" height="44.200" rx="5" fill="url(#arc)"/>
<rect x="35" y="597" width="4" height="27" fill="#efece6"/>
<g fill="#5d574d"><rect x="35" y="598.500" width="2" height="2"/><rect x="37" y="600.500" width="2" height="2"/><rect x="35" y="602.500" width="2" height="2"/><rect x="37" y="604.500" width="2" height="2"/><rect x="35" y="606.500" width="2" height="2"/><rect x="37" y="608.500" width="2" height="2"/><rect x="35" y="610.500" width="2" height="2"/><rect x="37" y="612.500" width="2" height="2"/><rect x="35" y="614.500" width="2" height="2"/></g>
<rect x="34.500" y="617" width="5" height="8" rx="1" fill="#f6f4ef"/><rect x="36.200" y="620.500" width="1.600" height="2.500" fill="#5d574d"/>
<circle cx="7.800" cy="618" r="3" fill="#e95420"/>
<!-- grid -->
<g fill="#f4e9f0"><rect x="21.700" y="666.100" width="6.100" height="6.100" rx="1.500"/><rect x="33.900" y="666.100" width="6.100" height="6.100" rx="1.500"/><rect x="46.100" y="666.100" width="6.100" height="6.100" rx="1.500"/><rect x="21.700" y="678.300" width="6.100" height="6.100" rx="1.500"/><rect x="33.900" y="678.300" width="6.100" height="6.100" rx="1.500"/><rect x="46.100" y="678.300" width="6.100" height="6.100" rx="1.500"/><rect x="21.700" y="690" width="6.100" height="6.100" rx="1.500"/><rect x="33.900" y="690" width="6.100" height="6.100" rx="1.500"/><rect x="46.100" y="690" width="6.100" height="6.100" rx="1.500"/></g>
<text x="37.300" y="481" text-anchor="middle" font-family="Liberation Sans, sans-serif" font-size="33.500" fill="#ffffff" fill-opacity=".96">?</text>
</svg>
</div>
</body>
</html>
